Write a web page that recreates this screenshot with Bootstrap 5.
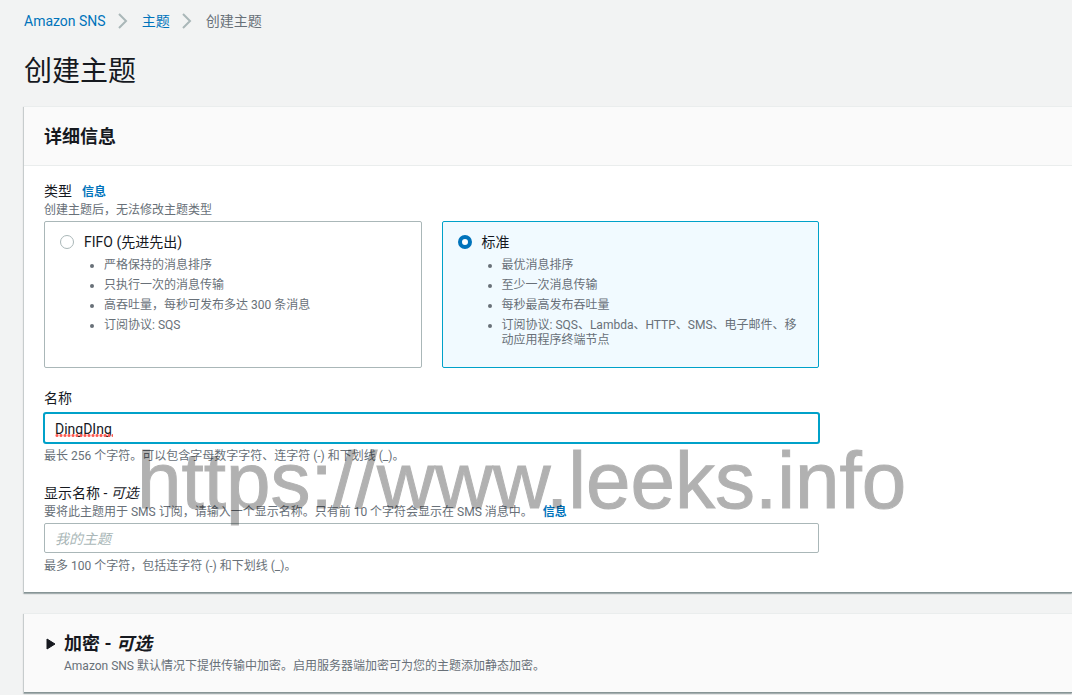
<!DOCTYPE html>
<html lang="zh-CN">
<head>
<meta charset="utf-8">
<meta name="viewport" content="width=device-width, initial-scale=1">
<title>创建主题 - Amazon SNS</title>
<link href="https://cdn.jsdelivr.net/npm/bootstrap@5.3.0/dist/css/bootstrap.min.css" rel="stylesheet">
<style>
  body { background: #f2f3f3; color: #16191f; font: 14px/22px Roboto, "Noto Sans CJK SC", sans-serif; overflow-x: hidden; }
  a { color: #0073bb; text-decoration: none; }
  .page { padding: 10px 0 0 24px; }
  .crumbs { gap: 12px; }
  .crumbs .active { color: #687078; }
  .page-title { font-size: 28px; line-height: 36px; font-weight: 400; margin: 22px 0 16px; }
  .panel { background: #fff; border: 0; border-top: 1px solid #eaeded; border-radius: 0; color: inherit;
    box-shadow: 0 1px 1px 0 rgba(0,28,36,.2), -1px 1px 1px 0 rgba(0,28,36,.15); border-bottom: 1px solid #879596; }
  .panel-top { background: #fafafa; border-bottom: 1px solid #eaeded; padding: 19px 20px 17px; }
  .panel-title { font-size: 18px; line-height: 22px; font-weight: 700; margin: 0; }
  .panel-main { padding: 14px 20px 18px; }
  .fields { max-width: 775px; }
  .hint { font-size: 12px; line-height: 16px; color: #687078; }
  .info-link { font-size: 12px; line-height: 16px; font-weight: 700; margin-left: 10px; }
  .type-row { height: 22px; }
  .tiles { display: grid; grid-template-columns: 1fr 1fr; gap: 20px; margin-top: 3px; }
  .tile { border: 1px solid #aab7b8; border-radius: 2px; padding: 9px 19px 19px 15px; gap: 10px; cursor: pointer; }
  .tile.selected { border-color: #00a1c9; background: #f1faff; }
  .tile .form-check-input { width: 14px; height: 14px; margin: 4px 0 0; border: 1px solid #aab7b8; flex: none; box-shadow: none; }
  .tile .form-check-input:checked { background: #fff; border: 4px solid #0073bb; }
  .tile ul { margin: 5px 0 0; padding-left: 20px; font-size: 12px; line-height: 15px; color: #687078; display: grid; gap: 5px; }
  .group { margin-top: 19px; }
  .group + .group { margin-top: 18px; }
  .field-input { height: 30px; padding: 4px 10px 2px; font-size: 14px; line-height: 22px; color: #16191f; border: 1px solid #aab7b8; border-radius: 2px; }
  .field-input::placeholder { color: #aab7b8; font-style: italic; }
  .field-input.active, .field-input.active:focus { border-color: #00a1c9; box-shadow: 0 0 0 1px #00a1c9; }
  .spelling::after { content: ""; position: absolute; left: 11px; bottom: 6px; width: 58px; height: 3px; pointer-events: none;
    background: radial-gradient(circle, #ff5a50 1px, transparent 2px) 0 0 / 4px 3px; }
  .label-hint { margin-bottom: 3px; }
  .input-hint { padding-top: 5px; }
  .expander { background: #fafafa; padding: 19px 20px 18px; border: 0; gap: 8px; color: inherit; }
  .expander .hint { margin-top: 3px; }
  .expander svg { margin: 5px 0 0 2px; flex: none; }
  .panel + .panel { margin: 20px 0 16px; }
  .watermark { position: absolute; left: 113px; top: 328px; font: 80px/92px "Liberation Sans", sans-serif; color: #000; -webkit-text-stroke: 1px #000; opacity: .3; white-space: nowrap; pointer-events: none; }
</style>
</head>
<body>
<main class="page">
  <nav aria-label="breadcrumb">
    <ol class="breadcrumb crumbs align-items-center m-0">
      <li><a href="#">Amazon SNS</a></li>
      <li class="d-flex" aria-hidden="true"><svg width="12" height="16" viewBox="0 0 12 16" fill="none" stroke="#aab7b8" stroke-width="2"><path d="M1 1l7 7-7 7"/></svg></li>
      <li><a href="#">主题</a></li>
      <li class="d-flex" aria-hidden="true"><svg width="12" height="16" viewBox="0 0 12 16" fill="none" stroke="#aab7b8" stroke-width="2"><path d="M1 1l7 7-7 7"/></svg></li>
      <li class="active" aria-current="page">创建主题</li>
    </ol>
  </nav>
  <h1 class="page-title">创建主题</h1>

  <section class="card panel">
    <header class="panel-top"><h2 class="panel-title">详细信息</h2></header>
    <div class="panel-main">
      <form class="fields">
        <div role="radiogroup" aria-labelledby="type-label">
          <div class="type-row d-flex align-items-baseline"><span id="type-label">类型</span><a class="info-link" href="#">信息</a></div>
          <div class="hint">创建主题后，无法修改主题类型</div>
          <div class="tiles">
            <label class="tile d-flex align-items-start" for="fifo">
              <input class="form-check-input" type="radio" name="type" id="fifo">
              <span>FIFO (先进先出)
                <ul>
                  <li>严格保持的消息排序</li>
                  <li>只执行一次的消息传输</li>
                  <li>高吞吐量，每秒可发布多达 300 条消息</li>
                  <li>订阅协议: SQS</li>
                </ul>
              </span>
            </label>
            <label class="tile selected d-flex align-items-start" for="standard">
              <input class="form-check-input" type="radio" name="type" id="standard" checked>
              <span>标准
                <ul>
                  <li>最优消息排序</li>
                  <li>至少一次消息传输</li>
                  <li>每秒最高发布吞吐量</li>
                  <li>订阅协议: SQS、Lambda、HTTP、SMS、电子邮件、移动应用程序终端节点</li>
                </ul>
              </span>
            </label>
          </div>
        </div>

        <div class="group">
          <label class="d-block mb-1" for="name">名称</label>
          <div class="position-relative spelling">
            <input class="form-control field-input active" id="name" type="text" value="DingDIng" spellcheck="false">
          </div>
          <div class="hint input-hint">最长 256 个字符。可以包含字母数字字符、连字符 (-) 和下划线 (_)。</div>
        </div>

        <div class="group">
          <label class="d-block" for="display">显示名称 - <em>可选</em></label>
          <div class="hint label-hint d-flex">要将此主题用于 SMS 订阅，请输入一个显示名称。只有前 10 个字符会显示在 SMS 消息中。<a class="info-link" href="#">信息</a></div>
          <input class="form-control field-input" id="display" type="text" placeholder="我的主题">
          <div class="hint input-hint">最多 100 个字符，包括连字符 (-) 和下划线 (_)。</div>
        </div>
      </form>
    </div>
    <div class="watermark" aria-hidden="true">https://www.leeks.info</div>
  </section>

  <section class="card panel">
    <button class="expander d-flex align-items-start text-start w-100" type="button" aria-expanded="false">
      <svg width="10" height="12" viewBox="0 0 10 12" fill="#16191f" stroke="#16191f" stroke-linejoin="round" aria-hidden="true"><path d="M1 1v10l8-5z"/></svg>
      <span>
        <span class="panel-title d-block">加密 - <em>可选</em></span>
        <span class="hint d-block">Amazon SNS 默认情况下提供传输中加密。启用服务器端加密可为您的主题添加静态加密。</span>
      </span>
    </button>
  </section>
</main>
<script src="https://cdn.jsdelivr.net/npm/bootstrap@5.3.0/dist/js/bootstrap.bundle.min.js"></script>
</body>
</html>
